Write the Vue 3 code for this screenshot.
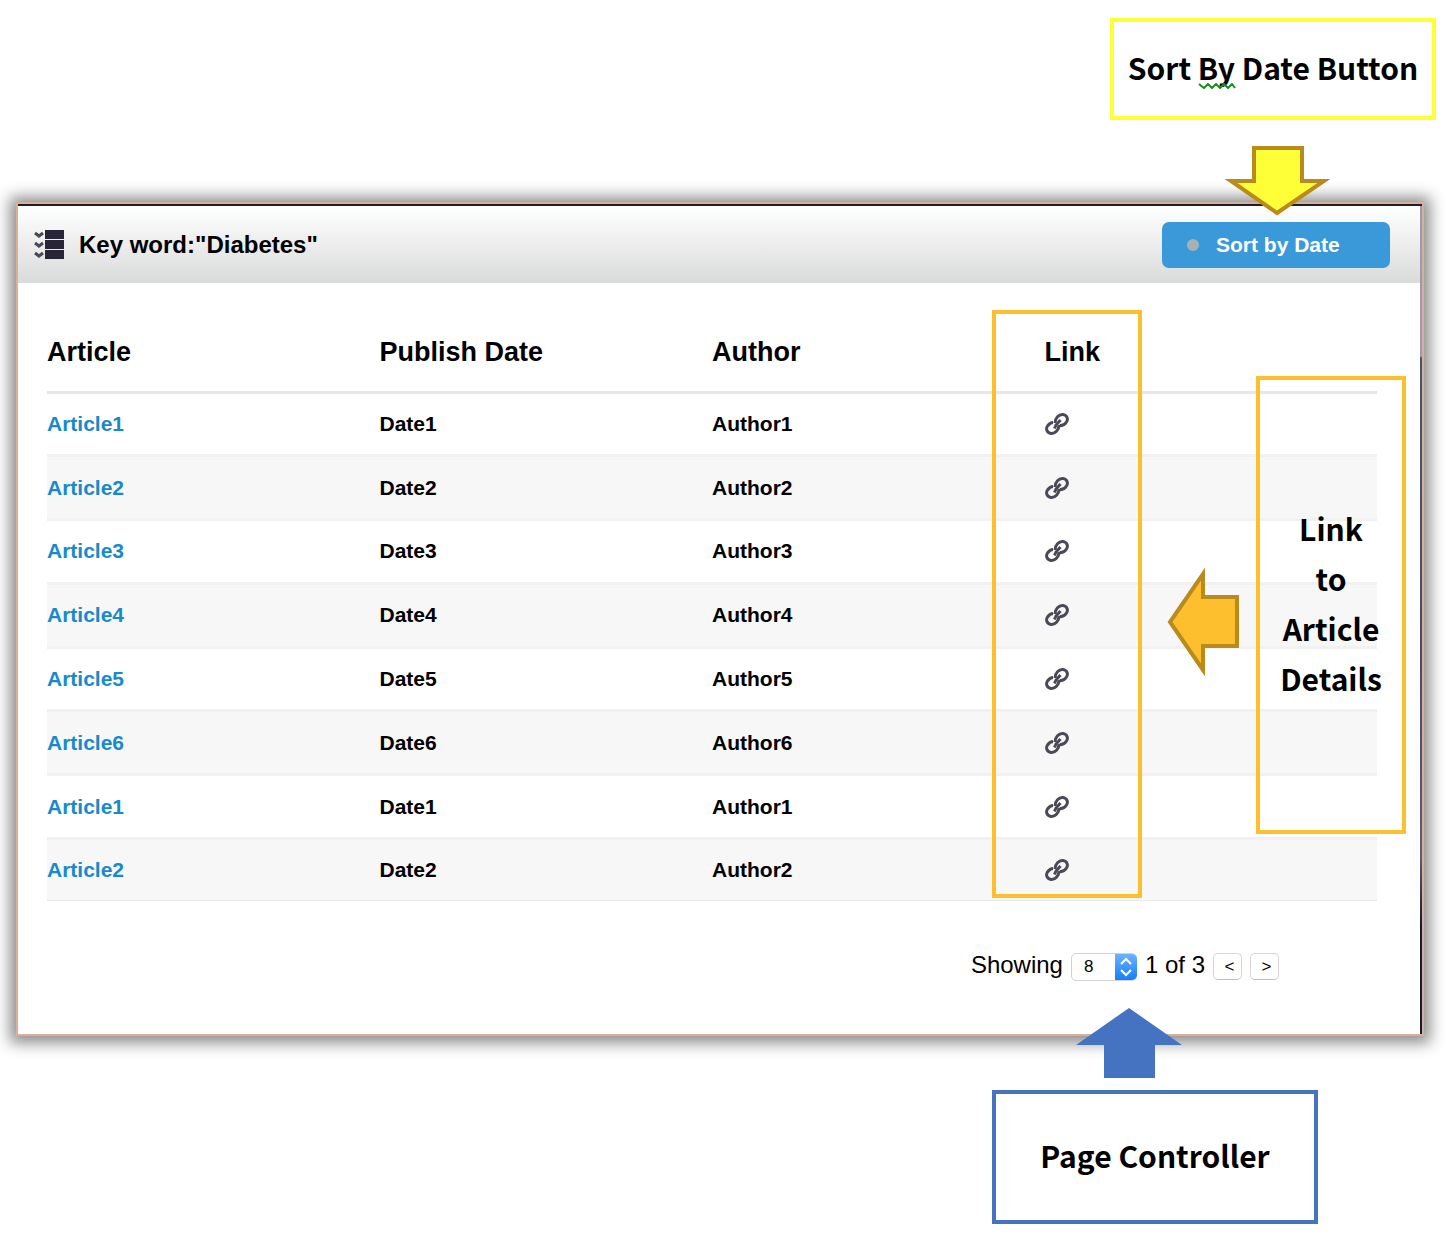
<script setup>
import { ref } from 'vue'

const pageSize = ref(8)
const rows = [1, 2, 3, 4, 5, 6, 1, 2].map((n) => ({
  article: `Article${n}`,
  date: `Date${n}`,
  author: `Author${n}`,
}))
</script>

<template>
  <main class="sheet">
    <div class="callout callout-sort">
      <p>Sort <span class="spelling">By<svg viewBox="0 0 38 6" aria-hidden="true"><path d="M1 1l5 4 4-4 4 4 4-4 4 4 4-4 4 4 4-4 3 4" /></svg></span> Date Button</p>
      <svg class="arrow-down" viewBox="0 0 106 70" aria-hidden="true"><path d="M30 2H78V35H100L53 67L7 35H30Z" /></svg>
    </div>

    <section class="panel">
      <header class="bar">
        <svg class="list-icon" viewBox="0 0 32 32" aria-hidden="true">
          <path class="blocks" d="M12 1h19v9H12zM12 11h19v9H12zM12 21h19v9H12z" />
          <path class="ticks" d="M2 4l4 3 4-3M2 14l4 3 4-3M2 24l4 3 4-3" />
        </svg>
        <h1>Key word:"Diabetes"</h1>
        <button type="button" class="sort"><i></i>Sort by Date</button>
      </header>

      <div class="content">
        <table>
          <thead>
            <tr><th>Article</th><th>Publish Date</th><th>Author</th><th>Link</th></tr>
          </thead>
          <tbody>
            <tr v-for="(row, i) in rows" :key="i">
              <td><a href="#">{{ row.article }}</a></td>
              <td>{{ row.date }}</td>
              <td>{{ row.author }}</td>
              <td>
                <a href="#" class="chain" :aria-label="'Open ' + row.article">
                  <svg viewBox="0 0 24 24" aria-hidden="true">
                    <path d="M10 11C10 6 14 2 18 2.500C22 3 23.500 7 21.500 10C19.500 13 17 14 14.500 13.500" />
                    <path d="M14 13C14 18 10 22 6 21.500C2 21 .500 17 2.500 14C4 12 6 10.500 8 10.500" />
                    <path d="M9.500 16.500L11 13L15.500 8" />
                  </svg>
                </a>
              </td>
            </tr>
          </tbody>
        </table>

        <footer class="pager">
          <label for="page-size">Showing</label>
          <span class="stepper">
            <select id="page-size" v-model="pageSize">
              <option :value="8">8</option>
              <option :value="16">16</option>
            </select>
            <svg viewBox="0 0 22 26" aria-hidden="true"><path d="M6 10l5-5 5 5M6 16l5 5 5-5" /></svg>
          </span>
          <span>1 of 3</span>
          <button type="button" aria-label="Previous page">&lt;</button>
          <button type="button" aria-label="Next page">&gt;</button>
        </footer>
      </div>

      <div class="link-frame"></div>
      <svg class="arrow-left" viewBox="0 0 72 108" aria-hidden="true"><path d="M70 29V78H36V102L3 54L36 6V29Z" /></svg>
      <div class="callout callout-link">
        <p>Link<br>to<br>Article<br>Details</p>
      </div>
    </section>

    <div class="callout callout-page">
      <svg class="arrow-up" viewBox="0 0 106 70" aria-hidden="true"><path d="M53 0L106 37H79V70H28V37H0Z" /></svg>
      <p>Page Controller</p>
    </div>
  </main>
</template>

<style>
body {
  margin: 0;
  background: #fff;
}
</style>

<style scoped>
* {
  box-sizing: border-box;
}

.sheet {
  display: flex;
  flex-direction: column;
  padding: 18px 10px 12px 16px;
  font-family: "Liberation Sans", Arial, sans-serif;
  color: #000;
}

.callout {
  display: flex;
  align-items: center;
  justify-content: center;
  padding-bottom: 4px;
  border: 4px solid;
  font-family: "Noto Sans CJK SC", sans-serif;
  font-size: 30px;
  font-weight: 700;
  line-height: 50px;
  text-align: center;
}

.callout p {
  margin: 0;
  color: #000;
  white-space: nowrap;
}

.callout-sort {
  position: relative;
  align-self: flex-end;
  width: 326px;
  height: 102px;
  border-color: #ffff37;
}

.spelling {
  position: relative;
}

.spelling svg {
  position: absolute;
  left: 0;
  bottom: 0;
  width: 38px;
  height: 6px;
  fill: none;
  stroke: #1f8a1f;
  stroke-width: 2;
}

.arrow-down {
  position: absolute;
  z-index: 2;
  top: 124px;
  left: 110px;
  width: 106px;
  height: 70px;
  fill: #ffff37;
  stroke: #b98b1c;
  stroke-width: 4;
}

.panel {
  position: relative;
  margin: 82px 12px 0 0;
  border: 2px solid #d8b098;
  background: #fff;
  box-shadow: 0 1px 14px 6px #8c8c8c;
}

.panel::after {
  content: "";
  position: absolute;
  top: 2px;
  right: 0;
  bottom: 0;
  width: 2px;
  background: linear-gradient(#9c98b8 0, #9c98b8 150px, #3c5672 152px, #454a72 450px, #5a5880 650px, #101c38 720px);
}

.bar {
  display: flex;
  align-items: center;
  height: 79px;
  padding: 0 32px 0 15px;
  border-top: 2px solid #1c2024;
  background: linear-gradient(#fff, #d9dbda);
}

.list-icon {
  width: 32px;
  height: 32px;
}

.blocks {
  fill: #272536;
}

.ticks {
  fill: none;
  stroke: #4b4956;
  stroke-width: 3;
}

h1 {
  flex: 1;
  margin: 0 0 0 14px;
  font-size: 24px;
  line-height: 32px;
}

button {
  font-family: inherit;
  cursor: pointer;
}

.sort {
  display: flex;
  align-items: center;
  width: 228px;
  height: 46px;
  padding: 0 25px;
  border: 0;
  border-radius: 7px;
  background: #3a99d9;
  color: #fff;
  font-size: 21px;
  font-weight: 700;
}

.sort i {
  width: 12px;
  height: 12px;
  margin-right: 17px;
  border-radius: 50%;
  background: #a5b1b3;
}

.content {
  padding: 28px 45px 53px 29px;
}

table {
  width: 100%;
  border-collapse: collapse;
  table-layout: fixed;
  font-size: 21px;
  font-weight: 700;
}

th,
td {
  padding: 0;
  text-align: left;
}

th {
  height: 81px;
  padding-top: 4px;
  font-size: 27px;
}

tbody {
  height: 508px;
}

tbody tr {
  border-top: 3px solid #f1f1f1;
}

tbody tr:first-child {
  border-top-color: #e7e7e7;
}

tbody tr:nth-child(even) {
  background: #f7f7f7;
}

tbody tr:last-child {
  border-bottom: 1px solid #e7e7e7;
}

td a {
  color: #188acb;
  text-decoration: none;
}

.chain svg {
  display: block;
  width: 24px;
  height: 24px;
  fill: none;
  stroke: #4b4956;
  stroke-width: 3;
}

.pager {
  display: flex;
  align-items: center;
  justify-content: flex-end;
  gap: 8px;
  padding: 48px 98px 0 0;
  font-size: 24px;
  line-height: 30px;
}

.stepper {
  position: relative;
  display: flex;
}

.pager .stepper,
.pager button {
  margin-top: 4px;
}

.stepper select {
  width: 66px;
  height: 28px;
  padding: 0 0 0 12px;
  border: 1px solid #d2d2d2;
  border-radius: 5px;
  appearance: none;
  background: #fff;
  color: #000;
  font-family: inherit;
  font-size: 17px;
}

.stepper svg {
  position: absolute;
  top: 1px;
  right: 0;
  width: 22px;
  height: 26px;
  border-radius: 0 5px 5px 0;
  background: linear-gradient(#6cb3fa, #157efb);
  fill: none;
  stroke: #fff;
  stroke-width: 2;
  pointer-events: none;
}

.pager button {
  width: 29px;
  height: 27px;
  padding: 0 0 0 4px;
  border: 1px solid #d6d6d6;
  border-bottom-color: #bdbdbd;
  border-radius: 5px;
  background: #fff;
  color: #000;
  font-size: 17px;
}

.link-frame {
  position: absolute;
  top: 106px;
  right: 280px;
  width: 150px;
  height: 588px;
  border: 4px solid #fdbf2d;
}

.arrow-left {
  position: absolute;
  top: 364px;
  right: 183px;
  width: 72px;
  height: 108px;
  fill: #fdbf2d;
  stroke: #b98b1c;
  stroke-width: 4;
}

.callout-link {
  position: absolute;
  top: 172px;
  right: 16px;
  width: 150px;
  height: 458px;
  border-color: #fdbf2d;
}

.callout-page {
  position: relative;
  align-self: flex-end;
  width: 326px;
  height: 134px;
  margin: 54px 118px 0 0;
  border-color: #4673c1;
}

.arrow-up {
  position: absolute;
  bottom: 142px;
  left: 80px;
  width: 106px;
  height: 70px;
  fill: #4673c1;
}
</style>
